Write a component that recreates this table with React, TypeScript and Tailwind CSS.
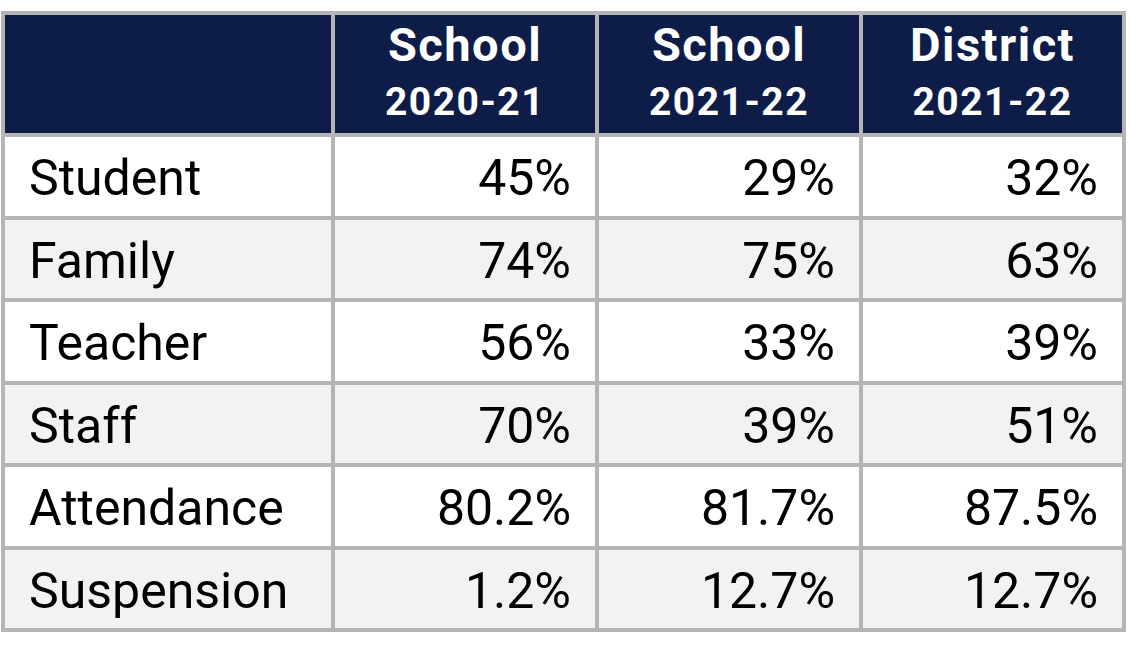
import React from 'react';

type Row = { label: string; values: string[] };

const rows: Row[] = [
    { label: 'Student', values: ['45%', '29%', '32%'] },
    { label: 'Family', values: ['74%', '75%', '63%'] },
    { label: 'Teacher', values: ['56%', '33%', '39%'] },
    { label: 'Staff', values: ['70%', '39%', '51%'] },
    { label: 'Attendance', values: ['80.2%', '81.7%', '87.5%'] },
    { label: 'Suspension', values: ['1.2%', '12.7%', '12.7%'] },
];

const headers = [
    { top: 'School', bottom: '2020-21' },
    { top: 'School', bottom: '2021-22' },
    { top: 'District', bottom: '2021-22' },
];

export default function App() {
    return (
        <div className="w-[1130px] h-[651px] bg-white pl-[1px] pt-[11px]" style={{ fontFamily: 'Roboto, "Liberation Sans", sans-serif' }}>
            <div className="grid w-[1125px] grid-cols-[326px_260px_260px_259px] grid-rows-[118px_79px_78px_79px_78px_79px_78px] gap-[4px] border-[4px] border-[#b5b5b5] bg-[#b5b5b5]">
                {/* Header */}
                <div className="bg-[#0e1c48]" />
                {headers.map((h, i) => (
                    <div key={i} className="bg-[#0e1c48] pt-[2px] text-center font-bold text-white">
                        <div className="text-[47px] leading-[56px] tracking-[1.5px]">{h.top}</div>
                        <div className="text-[39px] leading-[58px] tracking-[1.5px]">{h.bottom}</div>
                    </div>
                ))}

                {/* Body rows */}
                {rows.map((row, r) => {
                    const bg = r % 2 === 0 ? 'bg-white' : 'bg-[#f2f2f2]';
                    return (
                        <React.Fragment key={row.label}>
                            <div className={`${bg} flex items-center pl-[24px] pt-[4px] text-[50px] text-black`}>
                                {row.label}
                            </div>
                            {row.values.map((v, c) => (
                                <div key={c} className={`${bg} flex items-center justify-end pr-[24px] pt-[4px] text-[50px] text-black`}>
                                    {v}
                                </div>
                            ))}
                        </React.Fragment>
                    );
                })}
            </div>
        </div>
    );
}
